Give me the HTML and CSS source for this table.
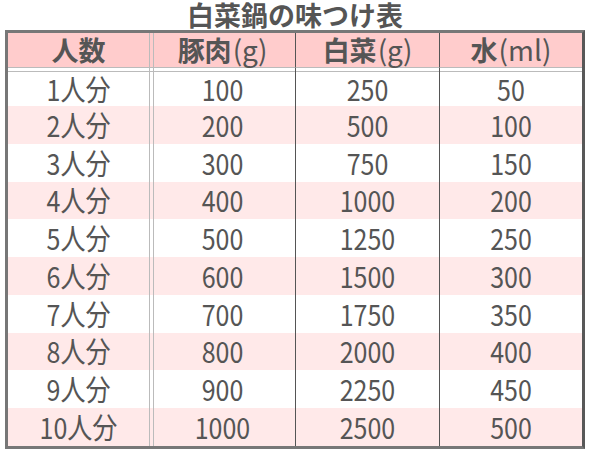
FILE: index.html
```html
<!DOCTYPE html>
<html lang="ja">
<head>
<meta charset="utf-8">
<title>白菜鍋の味つけ表</title>
<link rel="stylesheet" href="styles.css">
</head>
<body>
<h1 class="title">白菜鍋の味つけ表</h1>
<table class="chart">
<colgroup><col class="w1"><col class="w2"><col class="w3"><col class="w4"></colgroup>
<thead>
<tr><th class="c1">人数</th><th class="c2">豚肉<span class="p">(g)</span></th><th class="c3">白菜<span class="p">(g)</span></th><th class="c4">水<span class="p">(ml)</span></th></tr>
</thead>
<tbody>
<tr><td class="c1"><span class="n">1人分</span></td><td class="c2"><span class="n">100</span></td><td class="c3"><span class="n">250</span></td><td class="c4"><span class="n">50</span></td></tr>
<tr><td class="c1"><span class="n">2人分</span></td><td class="c2"><span class="n">200</span></td><td class="c3"><span class="n">500</span></td><td class="c4"><span class="n">100</span></td></tr>
<tr><td class="c1"><span class="n">3人分</span></td><td class="c2"><span class="n">300</span></td><td class="c3"><span class="n">750</span></td><td class="c4"><span class="n">150</span></td></tr>
<tr><td class="c1"><span class="n">4人分</span></td><td class="c2"><span class="n">400</span></td><td class="c3"><span class="n">1000</span></td><td class="c4"><span class="n">200</span></td></tr>
<tr><td class="c1"><span class="n">5人分</span></td><td class="c2"><span class="n">500</span></td><td class="c3"><span class="n">1250</span></td><td class="c4"><span class="n">250</span></td></tr>
<tr><td class="c1"><span class="n">6人分</span></td><td class="c2"><span class="n">600</span></td><td class="c3"><span class="n">1500</span></td><td class="c4"><span class="n">300</span></td></tr>
<tr><td class="c1"><span class="n">7人分</span></td><td class="c2"><span class="n">700</span></td><td class="c3"><span class="n">1750</span></td><td class="c4"><span class="n">350</span></td></tr>
<tr><td class="c1"><span class="n">8人分</span></td><td class="c2"><span class="n">800</span></td><td class="c3"><span class="n">2000</span></td><td class="c4"><span class="n">400</span></td></tr>
<tr><td class="c1"><span class="n">9人分</span></td><td class="c2"><span class="n">900</span></td><td class="c3"><span class="n">2250</span></td><td class="c4"><span class="n">450</span></td></tr>
<tr><td class="c1"><span class="n">10人分</span></td><td class="c2"><span class="n">1000</span></td><td class="c3"><span class="n">2500</span></td><td class="c4"><span class="n">500</span></td></tr>
</tbody>
</table>
</body>
</html>
```
FILE: styles.css
```css
body {
  margin: 0;
  background: #fff;
  color: #555;
  font-family: "Noto Sans CJK JP", sans-serif;
}
.title {
  margin: 0;
  width: 590px;
  height: 30px;
  line-height: 30px;
  text-align: center;
  font-size: 27px;
  font-weight: bold;
  color: #555;
}
.chart {
  margin-left: 5px;
  width: 580px;
  table-layout: fixed;
  border-collapse: separate;
  border-spacing: 0;
  border: 3px solid #777;
  border-right-color: #585858;
}
.w1 { width: 142px; }
.w2 { width: 146px; }
.w3 { width: 144px; }
.w4 { width: 142px; }
.chart th,
.chart td {
  padding: 0;
  text-align: center;
  vertical-align: middle;
  box-sizing: border-box;
}
.chart thead tr {
  height: 35px;
  background: #ffcccc;
}
.chart th {
  border-bottom: 1px solid #bbb;
  font-size: 27px;
  font-weight: bold;
  line-height: 30px;
  color: #555;
}
.chart th .p {
  font-weight: normal;
  font-size: 28px;
  line-height: 28px;
  margin-left: 1px;
}
.c1 { border-right: 1px solid #bbb; }
.c2 {
  border-right: 1px solid #555;
  background-image: linear-gradient(to right, transparent 3px, #bbb 3px, #bbb 4px, transparent 4px);
}
.c3 { border-right: 1px solid #555; }
.chart tbody tr { height: 37.78px; }
.chart tbody tr:nth-child(even) { background: #ffe9e9; }
.chart tbody tr:first-child { height: 38px; }
.chart tbody tr:first-child td {
  padding-top: 4px;
  background-image: linear-gradient(to bottom, transparent 3px, #bbb 3px, #bbb 4px, transparent 4px);
}
.chart tbody tr:first-child td.c2 {
  background-image:
    linear-gradient(to right, transparent 3px, #bbb 3px, #bbb 4px, transparent 4px),
    linear-gradient(to bottom, transparent 3px, #bbb 3px, #bbb 4px, transparent 4px);
}
.chart td {
  font-size: 25px;
  line-height: 28px;
}
.n {
  display: inline-block;
  line-height: 28px;
  transform: translateY(-1px) scale(1, 1.16);
}
```
